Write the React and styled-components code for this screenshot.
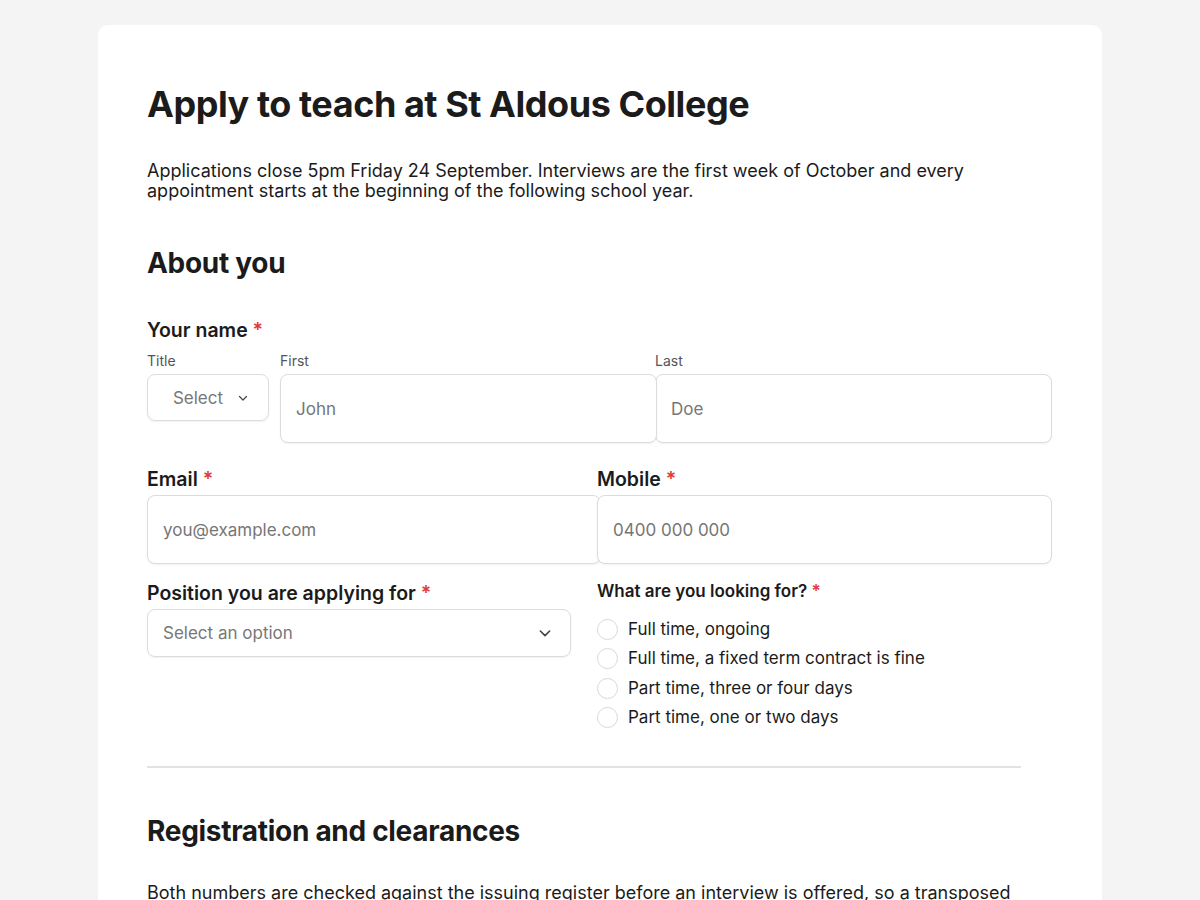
import { createGlobalStyle, styled } from 'styled-components';

const GlobalStyle = createGlobalStyle`
  html, body {
    margin: 0;
    padding: 0;
    background: #f4f4f4;
  }
  body {
    font-family: 'Inter', 'Noto Sans', sans-serif;
    color: #1b1b1b;
  }
  * {
    box-sizing: border-box;
  }
`;

const Chevron = ({ size = 12 }) => (
  <svg width={size} height={size} viewBox='0 0 24 24' fill='none' stroke='#444' strokeWidth='2.4' strokeLinecap='round' strokeLinejoin='round'>
    <path d='M5 9l7 7 7-7' />
  </svg>
);

const options = [
  'Full time, ongoing',
  'Full time, a fixed term contract is fine',
  'Part time, three or four days',
  'Part time, one or two days',
];

const App = () => {
  return (
    <>
      <GlobalStyle />
      <Page>
        <Card>
          <Title>Apply to teach at St Aldous College</Title>
          <Lead $gap={37}>
            Applications close 5pm Friday 24 September. Interviews are the first week of October and every
            appointment starts at the beginning of the following school year.
          </Lead>

          <SectionTitle $gap={45}>About you</SectionTitle>

          <Label $top={39}>
            Your name <Req>*</Req>
          </Label>
          <NameRow>
            <TitleField>
              <SubLabel>Title</SubLabel>
              <SmallSelect>
                <span>Select</span>
                <Chevron size={12} />
              </SmallSelect>
            </TitleField>
            <FirstField>
              <SubLabel>First</SubLabel>
              <TextInput $overlap={2} placeholder='John' />
            </FirstField>
            <LastField>
              <SubLabel>Last</SubLabel>
              <TextInput placeholder='Doe' />
            </LastField>
          </NameRow>

          <TwoCol>
            <Field>
              <Label>
                Email <Req>*</Req>
              </Label>
              <TextInput $overlap={4} placeholder='you@example.com' />
            </Field>
            <Field>
              <Label>
                Mobile <Req>*</Req>
              </Label>
              <TextInput placeholder='0400 000 000' />
            </Field>
          </TwoCol>

          <TwoCol>
            <Field>
              <Label $top={39}>
                Position you are applying for <Req>*</Req>
              </Label>
              <WideSelect>
                <span>Select an option</span>
                <Chevron size={16} />
              </WideSelect>
            </Field>
            <Field>
              <SmallLabel>
                What are you looking for? <Req>*</Req>
              </SmallLabel>
              <RadioList>
                {options.map((o) => (
                  <RadioRow key={o}>
                    <RadioDot />
                    {o}
                  </RadioRow>
                ))}
              </RadioList>
            </Field>
          </TwoCol>

          <Divider />

          <SectionTitle $gap={46}>Registration and clearances</SectionTitle>
          <Lead $gap={35}>
            Both numbers are checked against the issuing register before an interview is offered, so a transposed
            digit will hold up your application.
          </Lead>
        </Card>
      </Page>
    </>
  );
};

export default App;

const Page = styled.div`
  padding-top: 25px;
  min-height: 900px;
`;

const Card = styled.div`
  width: 1004px;
  margin: 0 auto;
  background: #fff;
  border-radius: 10px;
  padding: 59px 50px 60px 49px;
`;

const Title = styled.h1`
  margin: 0;
  font-size: 36px;
  line-height: 40px;
  font-weight: 700;
  letter-spacing: -0.45px;
`;

const Lead = styled.p`
  max-width: 874px;
  margin: ${(p) => p.$gap || 35}px 0 0;
  font-size: 18px;
  line-height: 20px;
`;

const SectionTitle = styled.h2`
  margin: ${(p) => p.$gap || 46}px 0 0;
  font-size: 28px;
  line-height: 34px;
  font-weight: 700;
  letter-spacing: -0.3px;
`;

const Label = styled.div`
  font-size: 19.5px;
  line-height: 22px;
  font-weight: 600;
  margin-top: ${(p) => p.$top || 37}px;
  margin-bottom: 5px;
`;

const SmallLabel = styled(Label)`
  font-size: 17px;
  margin-top: 37px;
  margin-bottom: 17px;
`;

const Req = styled.span`
  color: #e03b3b;
`;

const SubLabel = styled.div`
  font-size: 14px;
  line-height: 18px;
  color: #555;
  margin-bottom: 4px;
`;

const NameRow = styled.div`
  display: flex;
  margin-top: 11px;
`;

const Field = styled.div`
  min-width: 0;
`;

const TitleField = styled(Field)`
  width: 122px;
  margin-right: 11px;
`;

const FirstField = styled(Field)`
  flex: 0 0 375px;
  position: relative;
  z-index: 1;
`;

const LastField = styled(Field)`
  flex: 1;
`;

const TwoCol = styled.div`
  display: grid;
  grid-template-columns: 450px 1fr;
  margin-top: -12px;
  & + & {
    margin-top: -21px;
  }
`;

const TextInput = styled.input`
  display: block;
  width: calc(100% + ${(p) => p.$overlap || 0}px);
  height: 69px;
  padding: 0 15px;
  border: 1px solid #dcdcdc;
  border-radius: 8px;
  background: #fff;
  box-shadow: 0 1px 2px rgba(0, 0, 0, 0.06);
  font-family: inherit;
  font-size: 17px;
  color: #1b1b1b;
  outline: none;

  &::placeholder {
    color: #767676;
  }
`;

const SmallSelect = styled.div`
  height: 47px;
  border: 1px solid #dcdcdc;
  border-radius: 8px;
  box-shadow: 0 1px 2px rgba(0, 0, 0, 0.06);
  display: flex;
  align-items: center;
  justify-content: center;
  gap: 14px;
  padding-left: 6px;
  font-size: 17px;
  color: #777;
`;

const WideSelect = styled.div`
  width: 424px;
  height: 48px;
  border: 1px solid #dcdcdc;
  border-radius: 8px;
  box-shadow: 0 1px 2px rgba(0, 0, 0, 0.06);
  display: flex;
  align-items: center;
  justify-content: space-between;
  padding: 0 17px 0 15px;
  font-size: 17px;
  color: #777;
`;

const RadioList = styled.div`
  display: flex;
  flex-direction: column;
  gap: 8.3px;
`;

const RadioRow = styled.label`
  display: flex;
  align-items: center;
  gap: 10px;
  font-size: 17px;
  line-height: 21px;
`;

const RadioDot = styled.span`
  width: 21px;
  height: 21px;
  border: 1.5px solid #d8d8d8;
  border-radius: 50%;
  flex: none;
`;

const Divider = styled.hr`
  width: 874px;
  margin: 38px 0 0;
  border: none;
  border-top: 2px solid #e2e2e2;
`;
